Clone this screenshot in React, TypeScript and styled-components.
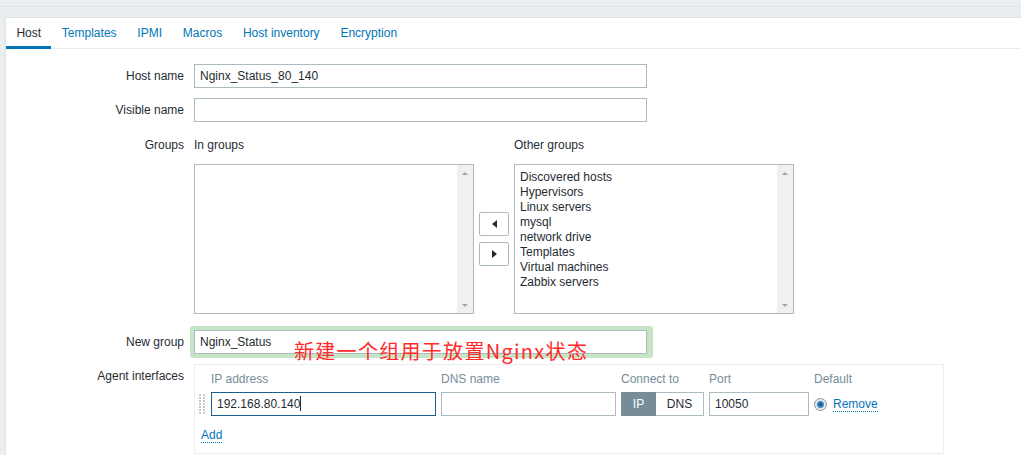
import React from "react";
import styled, { createGlobalStyle } from "styled-components";

const GlobalStyle = createGlobalStyle`
  html, body {
    margin: 0;
    padding: 0;
    background: #ebeef0;
    font-family: "Liberation Sans", Arial, sans-serif;
    font-size: 12px;
    color: #1f2c33;
  }
  * { box-sizing: border-box; }
`;

const TopStrip = styled.div`
  height: 7px;
  border-bottom: 1px solid #dde2e5;
`;

const Card = styled.div`
  margin: 10px 0 0 5px;
  background: #fff;
  border-top: 1px solid #dfe4e7;
  border-left: 1px solid #dfe4e7;
  height: 438px;
  overflow: hidden;
`;

const TabBar = styled.div`
  display: flex;
  height: 31px;
  border-bottom: 1px solid #e8ecef;
`;

const Tab = styled.div<{ $active?: boolean }>`
  padding: 1px 10.4px 0;
  line-height: 28px;
  height: 31px;
  color: ${(p) => (p.$active ? "#1f2c33" : "#0275b8")};
  border-bottom: 3px solid ${(p) => (p.$active ? "#0275b8" : "transparent")};
  margin-bottom: -1px;
`;

const Form = styled.div`
  padding-top: 15px;
`;

const FormRow = styled.div<{ $mb: number }>`
  display: grid;
  grid-template-columns: 178px 1fr;
  column-gap: 10px;
  margin-bottom: ${(p) => p.$mb}px;
`;

const Label = styled.div<{ $top?: number }>`
  text-align: right;
  line-height: ${(p) => (p.$top !== undefined ? "14px" : "24px")};
  padding-top: ${(p) => p.$top ?? 0}px;
  white-space: nowrap;
`;

const Field = styled.div`
  position: relative;
`;

const TextInput = styled.div<{ $width: number; $focused?: boolean }>`
  width: ${(p) => p.$width}px;
  height: 24px;
  border: 1px solid ${(p) => (p.$focused ? "#1d5f8f" : "#acbbc2")};
  background: #fff;
  padding: 0 5px;
  line-height: 22px;
  font-size: 12px;
  color: #1f2c33;
  white-space: nowrap;
  overflow: hidden;
`;

const Caret = styled.span`
  display: inline-block;
  width: 1px;
  height: 15px;
  background: #1f2c33;
  vertical-align: -3px;
`;

const GroupsGrid = styled.div`
  display: grid;
  grid-template-columns: 280px 40px 280px;
  grid-template-rows: 14px 150px;
  row-gap: 12px;
  line-height: 14px;
`;

const ColumnTitle = styled.div`
  line-height: 14px;
`;

const ListBox = styled.div`
  display: flex;
  border: 1px solid #acbbc2;
  background: #fff;
`;

const ListItems = styled.div`
  flex: 1;
  padding: 5px 5px;
  line-height: 15px;
  color: #1f2c33;
`;

const ScrollTrack = styled.div`
  width: 16px;
  background: #f0f0f0;
  display: flex;
  flex-direction: column;
  justify-content: space-between;
  align-items: center;
  padding: 7px 0 6px;
`;

const ScrollArrow = styled.span<{ $down?: boolean }>`
  width: 0;
  height: 0;
  border-left: 3px solid transparent;
  border-right: 3px solid transparent;
  ${(p) =>
    p.$down
      ? "border-top: 3px solid #a3a3a3;"
      : "border-bottom: 3px solid #a3a3a3;"}
`;

const MoveButtons = styled.div`
  display: flex;
  flex-direction: column;
  align-items: flex-start;
  justify-content: center;
  gap: 6px;
  padding-left: 5px;
`;

const MoveButton = styled.div`
  width: 30px;
  height: 24px;
  border: 1px solid #acbbc2;
  border-radius: 2px;
  background: #fff;
  display: flex;
  align-items: center;
  justify-content: center;
`;

const Triangle = styled.span<{ $dir: "left" | "right" }>`
  width: 0;
  height: 0;
  border-top: 4px solid transparent;
  border-bottom: 4px solid transparent;
  ${(p) =>
    p.$dir === "left"
      ? "border-right: 5px solid #1f2c33;"
      : "border-left: 5px solid #1f2c33;"}
`;

const Highlight = styled.div`
  position: relative;
  width: 453px;
  &::before {
    content: "";
    position: absolute;
    left: -4px;
    right: -6px;
    top: -4px;
    bottom: -4px;
    background: #c6e4c6;
    border-radius: 3px;
  }
  & > * {
    position: relative;
  }
`;

const Annotation = styled.div`
  position: absolute;
  left: 100px;
  top: 10px;
  font-family: "Noto Sans CJK SC", "Liberation Sans", sans-serif;
  font-size: 20px;
  letter-spacing: 1.3px;
  line-height: 22px;
  color: #ff2a2a;
  white-space: nowrap;
`;

const InterfacesBox = styled.div`
  width: 750px;
  border: 1px solid #ebeef0;
  padding: 7px 0 11px;
`;

const InterfaceGrid = styled.div`
  display: grid;
  grid-template-columns: 11px 225px 175px 83px 100px auto;
  column-gap: 5px;
  row-gap: 6px;
  align-items: center;
`;

const HeadCell = styled.div`
  color: #768d99;
  line-height: 14px;
`;

const DragHandle = styled.svg`
  justify-self: end;
  margin-right: 1px;
`;

const Toggle = styled.div`
  display: flex;
  height: 24px;
`;

const ToggleOption = styled.div<{ $on?: boolean }>`
  width: ${(p) => (p.$on ? 35 : 48)}px;
  border: 1px solid ${(p) => (p.$on ? "#768d99" : "#acbbc2")};
  ${(p) => (p.$on ? "" : "border-left: none;")}
  background: ${(p) => (p.$on ? "#768d99" : "#fff")};
  color: ${(p) => (p.$on ? "#fff" : "#1f2c33")};
  text-align: center;
  line-height: 22px;
`;

const DefaultCell = styled.div`
  display: flex;
  align-items: center;
  gap: 6px;
`;

const Radio = styled.span`
  width: 13px;
  height: 13px;
  border-radius: 50%;
  border: 1px solid #8e8f8f;
  background: radial-gradient(
    circle,
    #1a4f7a 0,
    #2e78b3 2px,
    #3f8dc9 3px,
    #dfe3e6 4px,
    #f4f4f4 6px
  );
`;

const DottedLink = styled.span`
  color: #0275b8;
  border-bottom: 1px dotted #0275b8;
  line-height: 14px;
`;

const AddRow = styled.div`
  padding: 12px 0 0 6px;
`;

const otherGroups = [
  "Discovered hosts",
  "Hypervisors",
  "Linux servers",
  "mysql",
  "network drive",
  "Templates",
  "Virtual machines",
  "Zabbix servers",
];

const Scrollbar: React.FC = () => (
  <ScrollTrack>
    <ScrollArrow />
    <ScrollArrow $down />
  </ScrollTrack>
);

const tabs = ["Host", "Templates", "IPMI", "Macros", "Host inventory", "Encryption"];

const App: React.FC = () => {
  return (
    <>
      <GlobalStyle />
      <TopStrip />
      <Card>
        <TabBar>
          {tabs.map((t, i) => (
            <Tab key={t} $active={i === 0}>
              {t}
            </Tab>
          ))}
        </TabBar>
        <Form>
          <FormRow $mb={10}>
            <Label>Host name</Label>
            <Field>
              <TextInput $width={453}>Nginx_Status_80_140</TextInput>
            </Field>
          </FormRow>
          <FormRow $mb={16}>
            <Label>Visible name</Label>
            <Field>
              <TextInput $width={453} />
            </Field>
          </FormRow>
          <FormRow $mb={16}>
            <Label $top={0}>Groups</Label>
            <GroupsGrid>
              <ColumnTitle>In groups</ColumnTitle>
              <div />
              <ColumnTitle>Other groups</ColumnTitle>
              <ListBox>
                <ListItems />
                <Scrollbar />
              </ListBox>
              <MoveButtons>
                <MoveButton>
                  <Triangle $dir="left" />
                </MoveButton>
                <MoveButton>
                  <Triangle $dir="right" />
                </MoveButton>
              </MoveButtons>
              <ListBox>
                <ListItems>
                  {otherGroups.map((g) => (
                    <div key={g}>{g}</div>
                  ))}
                </ListItems>
                <Scrollbar />
              </ListBox>
            </GroupsGrid>
          </FormRow>
          <FormRow $mb={10}>
            <Label>New group</Label>
            <Field>
              <Highlight>
                <TextInput $width={453}>Nginx_Status</TextInput>
              </Highlight>
              <Annotation>新建一个组用于放置Nginx状态</Annotation>
            </Field>
          </FormRow>
          <FormRow $mb={0}>
            <Label $top={5}>Agent interfaces</Label>
            <InterfacesBox>
              <InterfaceGrid>
                <div />
                <HeadCell>IP address</HeadCell>
                <HeadCell>DNS name</HeadCell>
                <HeadCell>Connect to</HeadCell>
                <HeadCell>Port</HeadCell>
                <HeadCell>Default</HeadCell>

                <DragHandle width="6" height="20" viewBox="0 0 6 20">
                  {Array.from({ length: 7 }).map((_, r) => (
                    <React.Fragment key={r}>
                      <rect x="0" y={r * 3} width="2" height="2" fill="#c2c9cd" />
                      <rect x="4" y={r * 3} width="2" height="2" fill="#c2c9cd" />
                    </React.Fragment>
                  ))}
                </DragHandle>
                <TextInput $width={225} $focused>
                  192.168.80.140
                  <Caret />
                </TextInput>
                <TextInput $width={175} />
                <Toggle>
                  <ToggleOption $on>IP</ToggleOption>
                  <ToggleOption>DNS</ToggleOption>
                </Toggle>
                <TextInput $width={100}>10050</TextInput>
                <DefaultCell>
                  <Radio />
                  <DottedLink>Remove</DottedLink>
                </DefaultCell>
              </InterfaceGrid>
              <AddRow>
                <DottedLink>Add</DottedLink>
              </AddRow>
            </InterfacesBox>
          </FormRow>
        </Form>
      </Card>
    </>
  );
};

export default App;
